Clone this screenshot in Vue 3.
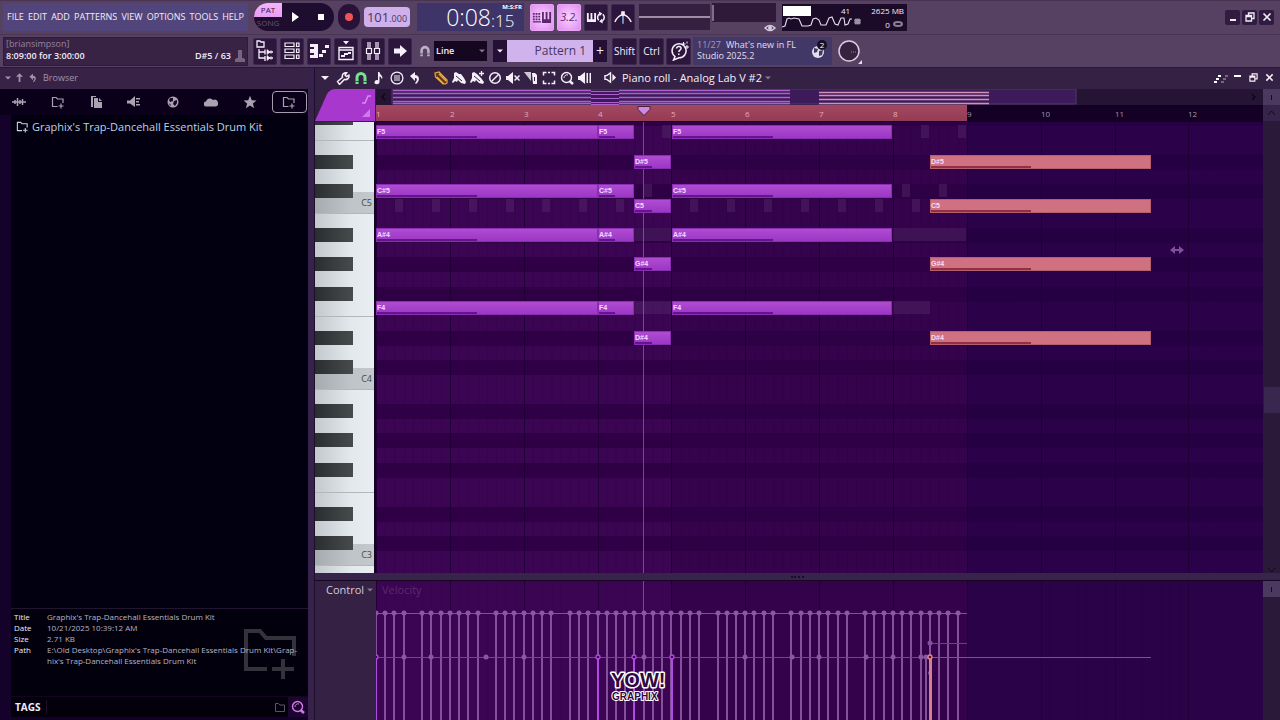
<script setup>
const menus = ['FILE', 'EDIT', 'ADD', 'PATTERNS', 'VIEW', 'OPTIONS', 'TOOLS', 'HELP']
const panels = [
  ['playlist', 'Playlist'],
  ['rack', 'Channel rack'],
  ['pianoroll', 'Piano roll'],
  ['event', 'Event editor'],
  ['mixer', 'Mixer'],
  ['arrow', 'Next'],
]
const tabs = ['wave', 'folder', 'files', 'plug', 'globe', 'cloud', 'star', 'folder']
const tools = [
  ['wrench', 'Tools'], ['magnet', 'Snap', 'green'], ['note', 'Stamp'], ['lines', 'View'], ['undo', 'Undo'],
  ['pencil', 'Draw', 'gold gap'], ['brush', 'Paint'], ['brushplus', 'Paint sequence'], ['ban', 'Delete'],
  ['mute', 'Mute'], ['slice', 'Slice'], ['select', 'Select'], ['zoom', 'Zoom'], ['play2', 'Playback'],
]
const info = [
  ['Title', "Graphix's Trap-Dancehall Essentials Drum Kit"],
  ['Date', '10/21/2025 10:39:12 AM'],
  ['Size', '2.71 KB'],
  ['Path', "E:\\Old Desktop\\Graphix's Trap-Dancehall Essentials Drum Kit\\Grap-\nhix's Trap-Dancehall Essentials Drum Kit"],
]

/* Timeline geometry: one bar in pixels, one semitone in pixels */
const BAR = 73.85
const SEMI = 176 / 12
const barX = (n) => Math.round(n * BAR)
const bars = Array.from({ length: 12 }, (_, i) => i)

/* Row 0 is F5, counting down by semitone; row -1 is the F#5 sliver */
const rowY = (r) => Math.round(3.4 + r * SEMI)
const isBlack = (r) => [1, 3, 6, 8, 10].includes((((5 - r) % 12) + 12) % 12)
const rows = Array.from({ length: 33 }, (_, i) => i - 1)
const blackRows = rows.filter(isBlack)
const keyLines = [1, 6, 13, 18, 25, 30].map(rowY)
const cKeys = [['C5', 5], ['C4', 17], ['C3', 29]]

const chord = [['F5', 0], ['C#5', 4], ['A#4', 7], ['F4', 12]]
const low = [['D#5', 2], ['C5', 5], ['G#4', 9], ['D#4', 14]]
const notes = [
  ...chord.flatMap(([name, r]) => [
    { name, r, x: 0, w: 222, v: 100 },
    { name, r, x: 222, w: 36, v: 16 },
    { name, r, x: 296, w: 220, v: 100 },
  ]),
  ...low.flatMap(([name, r]) => [
    { name, r, x: 258, w: 37, v: 17 },
    { name, r, x: 554, w: 221, v: 100, red: true },
  ]),
]
const ghosts = [
  ...[19, 56, 93, 130, 166, 203, 240, 314, 351, 388, 425, 462, 499, 536].map((x) => [x, 5, 8]),
  [268, 4, 8], [526, 4, 8], [563, 4, 8],
  [286, 0, 9], [545, 0, 8], [582, 0, 8],
  [258, 7, 37], [517, 7, 73], [258, 12, 37], [517, 12, 37],
]

const skipped = [4, 12, 20, 36, 44, 52]
const stalks = Array.from({ length: 64 }, (_, i) => i)
  .filter((i) => !skipped.includes(i))
  .map((i) => Math.round((i * BAR) / 8))
const midDots = [28, 55, 110, 148, 268, 369, 416, 443, 490, 517, 545, 550]
const rings = [0, 222, 258, 296]
const mapLines = [1, 4, 8, 12, 14]
</script>

<template>
  <svg class="defs" aria-hidden="true">
    <defs>
      <symbol id="playlist" viewBox="0 0 20 22"><path d="M2 7V1h3l1 1h3v5zM4 9v9h6M4 12h6M10 9.500v5M10 16v5M13 12h5M13 18h5" fill="none" stroke="currentColor" stroke-width="1.300" /><path d="M12 9.500l3 2.500-3 2.500zM12 15.500l3 2.500-3 2.500zM16 10v4M16 16v4" fill="currentColor" stroke="currentColor" stroke-width=".6" /></symbol>
      <symbol id="rack" viewBox="0 0 20 22"><path d="M3 3h9v3.500H3zM3 9h9v3.500H3zM3 15h9v3.500H3zM14.500 3H17v3.500h-2.500zM14.500 9H17v3.500h-2.500zM14.500 15H17v3.500h-2.500z" fill="none" stroke="currentColor" stroke-width="1.200" /></symbol>
      <symbol id="pianoroll" viewBox="0 0 20 22"><path d="M1 4h8v14H1v-3h4v-2H1v-4h4V7H1zM10 14h4v3h-4zM13 10h4v3h-4zM16 5h4v3h-4z" fill="currentColor" /></symbol>
      <symbol id="event" viewBox="0 0 20 22"><path d="M3 7.500h14v12H3zM3 10h14" fill="none" stroke="currentColor" stroke-width="1.400" /><path d="M7 1h6l-3 3.500zM5 15h4v2H5zM8 13h4v2H8zM12 12h3v2h-3z" fill="currentColor" /></symbol>
      <symbol id="mixer" viewBox="0 0 20 22"><path d="M5 2v6M7 2v6M5 14v6M7 14v6M13 2v6M15 2v6M13 14v6M15 14v6M3.500 8.500h5v5h-5zM11.500 8.500h5v5h-5z" fill="none" stroke="currentColor" stroke-width="1.200" /></symbol>
      <symbol id="arrow" viewBox="0 0 20 22"><path d="M4 8.500h6V5l7 6-7 6v-3.500H4z" fill="currentColor" /></symbol>
      <symbol id="keys" viewBox="0 0 22 16"><path d="M1 3h2v2H1zM4 3h2v2H4zM7 3h2v2H7zM1 6h2v2H1zM4 6h2v2H4zM7 6h2v2H7zM1 9h2v2H1zM4 9h2v2H4zM7 9h2v2H7zM1 12h9v1.500H1zM11 2h2v8h2V2h2v8h2V2h2v12H11z" fill="currentColor" /></symbol>
      <symbol id="loop" viewBox="0 0 22 16"><path d="M1 3h2v7h2V3h2v7h2V3h2v10H1z" fill="currentColor" /><path d="M14 11a4.500 4.500 0 0 1 1-7M18.500 4.500a4.500 4.500 0 0 1-1 7.500" fill="none" stroke="currentColor" stroke-width="1.700" /><path d="M14 1.500l4 2-3 3zM18.500 14.500l-4-2 3-3z" fill="currentColor" /></symbol>
      <symbol id="metro" viewBox="0 0 22 16"><path d="M2 13C4 8 8 5 11 5s7 3 9 8" fill="none" stroke="currentColor" stroke-width="1.500" /><path d="M11 4v11" stroke="#8ec8ff" stroke-width="1.500" /><path d="M9 1h4v4l-2 2-2-2z" fill="currentColor" /></symbol>
      <symbol id="wave" viewBox="0 0 14 14"><path d="M0 7h14M3 5v4M5.500 3v8M8 5v4M10.500 4v6" stroke="currentColor" stroke-width="1.500" /></symbol>
      <symbol id="folder" viewBox="0 0 14 14"><path d="M6.500 11.500H1.500V2.500H5L6.500 4H12v4M10 8.500v5M7.500 11h5" fill="none" stroke="currentColor" stroke-width="1.200" /></symbol>
      <symbol id="files" viewBox="0 0 14 14"><path d="M2 1h5v1H4v10H2zM5 3h4v4h4v6H5zM10 3l3 3h-3z" fill="currentColor" /></symbol>
      <symbol id="plug" viewBox="0 0 14 14"><path d="M0 5.500h3L8 1v11L3 8.500H0zM9 3h4v1.500H9zM9 6h3v1.500H9zM9 9h4v1.500H9z" fill="currentColor" /></symbol>
      <symbol id="globe" viewBox="0 0 14 14"><circle cx="7" cy="7" r="5.500" fill="currentColor" /><path d="M4 3l3 0 0 3-3 1-1-2zM8 6l3-1v3l-2 3-2-2zM3 8l2 2-1 1z" fill="#170826" /></symbol>
      <symbol id="cloud" viewBox="0 0 14 14"><path d="M2.500 11.500a2.500 2.500 0 0 1-.5-5A4 4 0 0 1 9 5a3.300 3.300 0 0 1 3 6.500z" fill="currentColor" /></symbol>
      <symbol id="star" viewBox="0 0 14 14"><path d="M7 .8l1.800 4.400 4.700.3-3.600 3 1.200 4.700L7 10.600l-4.100 2.600 1.200-4.700-3.600-3 4.700-.3z" fill="currentColor" /></symbol>
      <symbol id="wrench" viewBox="0 0 14 14"><path d="M1.500 10.500l5-4.200a3.500 3.500 0 0 1 4.200-4.500L9 4l1.500 1.600 2.400-1.500a3.500 3.500 0 0 1-4.500 4.300l-4.900 5z" fill="none" stroke="currentColor" stroke-width="1.500" /></symbol>
      <symbol id="magnet" viewBox="0 0 14 14"><path d="M3 13V6.500a4 4 0 0 1 8 0V13" fill="none" stroke="currentColor" stroke-width="3" /><path d="M1.500 10.500h3M9.500 10.500h3" stroke="#222" stroke-width=".8" /></symbol>
      <symbol id="note" viewBox="0 0 14 14"><path d="M6 1h1.500c0 2.500 3 3 3 6l-.8 1C9.500 6 8 5.500 7.500 5.500V11A2.500 2 0 1 1 6 9.300z" fill="currentColor" /></symbol>
      <symbol id="lines" viewBox="0 0 14 14"><circle cx="7" cy="7" r="5.900" fill="none" stroke="currentColor" stroke-width="1.300" /><path d="M4 5h6M4 7h6M4 9h6" stroke="currentColor" stroke-width="1" /></symbol>
      <symbol id="undo" viewBox="0 0 14 14"><path d="M2 5l5-4v3c4 0 6 5 1 9l-1-1c3-3 2-5 0-5v3z" fill="currentColor" /></symbol>
      <symbol id="pencil" viewBox="0 0 14 14"><path d="M1 2l4-1 8 8v3l-1.500 1H9L1.500 6zM3 6l7 7M5 3l7 7" fill="#5a3a18" stroke="currentColor" stroke-width="1.200" /></symbol>
      <symbol id="brush" viewBox="0 0 14 14"><path d="M2 2l2-1 3 2 2 0 3 4 2 4-1 2-4-1-3-3-1 2-2-1-2 2-1-1 2-4z" fill="currentColor" /><path d="M4 5l6 5" stroke="#332143" /></symbol>
      <symbol id="brushplus" viewBox="0 0 14 14"><path d="M2 2l2-1 3 2 1 1 3 3 3 4-1 2-4-1-3-3-1 2-2-1-2 2-1-1 2-4z" fill="currentColor" /><path d="M4 5l6 5" stroke="#332143" /><path d="M11.500 0v5M9 2.500h5" stroke="currentColor" stroke-width="1.300" /></symbol>
      <symbol id="ban" viewBox="0 0 14 14"><circle cx="7" cy="7" r="5.300" fill="none" stroke="currentColor" stroke-width="1.500" /><path d="M3.500 10.500l7-7" stroke="currentColor" stroke-width="1.500" /></symbol>
      <symbol id="mute" viewBox="0 0 14 14"><path d="M0 5h2l5-4v12L2 9H0z" fill="currentColor" /><path d="M8.500 4.500l5 5M13.500 4.500l-5 5" stroke="currentColor" stroke-width="1.500" /></symbol>
      <symbol id="slice" viewBox="0 0 14 14"><path d="M0 1h7v9z" fill="currentColor" opacity=".8" /><path d="M8 2h3l2 2v9H9z" fill="currentColor" /><path d="M10 6h1v4h-1z" fill="#332143" /></symbol>
      <symbol id="select" viewBox="0 0 14 14"><path d="M1.500 4.500v-3h3M9.500 1.500h3v3M12.500 9.500v3h-3M4.500 12.500h-3v-3M6 1.500h2M6 12.500h2" fill="none" stroke="currentColor" stroke-width="1.500" /></symbol>
      <symbol id="zoom" viewBox="0 0 14 14"><circle cx="6.500" cy="6.500" r="5" fill="none" stroke="currentColor" stroke-width="1.400" /><path d="M4 7a3 3 0 0 1 4-3" fill="none" stroke="currentColor" /><path d="M9.500 10l3.500 3" stroke="currentColor" stroke-width="2.500" /></symbol>
      <symbol id="play2" viewBox="0 0 14 14"><path d="M0 5h2l5-4v12L2 9H0zM8.500 2H10v10H8.500zM11.500 2H13v10h-1.500z" fill="currentColor" /></symbol>
      <symbol id="speaker" viewBox="0 0 14 14"><path d="M1 5h2l4-3v10L3 9H1z" fill="none" stroke="currentColor" stroke-width="1.500" /><path d="M9 3l4 4-4 4z" fill="currentColor" /></symbol>
      <symbol id="down" viewBox="0 0 8 8"><path d="M0 2h8L4 6z" fill="currentColor" /></symbol>
      <symbol id="up" viewBox="0 0 8 12"><path d="M4 1l4 4H5v6H3V5H0z" fill="currentColor" /></symbol>
      <symbol id="restore" viewBox="0 0 10 10"><path d="M1 3.500h5.500V9H1zM1 4.500h5.500M3.500 3V1H9v5.500H7" fill="none" stroke="currentColor" stroke-width="1.300" /></symbol>
      <symbol id="close" viewBox="0 0 10 10"><path d="M1.500 1.500l7 7M8.500 1.500l-7 7" stroke="currentColor" stroke-width="1.700" /></symbol>
      <symbol id="min" viewBox="0 0 10 10"><path d="M2 8h6" stroke="currentColor" stroke-width="2" /></symbol>
      <symbol id="help" viewBox="0 0 20 20"><path d="M6 15.500a7 7 0 1 1 4 1.300L4.500 19z" fill="none" stroke="currentColor" stroke-width="1.500" /><path d="M7.500 7.500c.5-3 5-2.500 4.500.2-.3 1.500-2.200 1.500-2.200 3.300M9.800 12.500v1.500" fill="none" stroke="currentColor" stroke-width="1.500" /><path d="M14.500 1v4M12.500 3h4M18 4v4M16 6h4M18 .5v2" stroke="currentColor" /></symbol>
    </defs>
  </svg>

  <div class="app">
    <header class="top">
      <div class="bar">
        <nav class="menu" aria-label="Main menu">
          <button v-for="m in menus" :key="m" type="button">{{ m }}</button>
        </nav>
        <div class="transport">
          <button class="mode" type="button" aria-label="Pattern or song"><b>PAT</b><span>SONG</span></button>
          <button class="tbtn" type="button" aria-label="Play"><svg width="7" height="10"><path d="M0 0l7 5-7 5z" fill="#fff" /></svg></button>
          <button class="tbtn" type="button" aria-label="Stop"><svg width="6" height="6"><path d="M0 0h6v6H0z" fill="#fff" /></svg></button>
        </div>
        <button class="rec" type="button" aria-label="Record"><i></i></button>
        <button class="tempo" type="button" aria-label="Tempo">101<small>.000</small></button>
        <div class="time"><span>0:08</span><div><small>M:S:FR</small><em>:15</em></div></div>
        <div class="keyset">
          <button class="sq lit" type="button" aria-label="Typing keyboard"><svg width="20" height="15"><use href="#keys" /></svg></button>
          <button class="sq lit num" type="button" aria-label="Countdown">3.2.</button>
          <button class="sq" type="button" aria-label="Loop recording"><svg width="20" height="15"><use href="#loop" /></svg></button>
          <button class="sq" type="button" aria-label="Metronome"><svg width="20" height="15"><use href="#metro" /></svg></button>
        </div>
        <input class="vol" type="range" value="0" aria-label="Main volume" />
        <div class="pitchbox">
          <input class="pitch" type="range" value="0" aria-label="Main pitch" />
          <svg width="12" height="8"><path d="M1 4q5-5 10 0-5 5-10 0z" fill="none" stroke="#d8cce0" stroke-width="1.500" /><circle cx="6" cy="4" r="2" fill="#d8cce0" /></svg>
        </div>
        <div class="cpu">
          <svg class="graph" width="80" height="26"><path d="M1 1h28v10H1z" fill="#fff" /><path d="M0 22l3-1 2-7 2-1 2 1 3-1 5 1 3 7 6 0 3-1 2-6 3-1 3 2 2 5 5 0 3-7 3-1 3 7 3 1 3-7 3 0 1 7 3-1 2-5 2 0" fill="none" stroke="#e4dcec" stroke-width="1.100" /><path d="M73 14h5v5h-5zM72 15.500h7M72 17.500h7" fill="#9c90a6" stroke="#9c90a6" stroke-width=".7" /></svg>
          <span class="load">41</span>
          <span class="mem">2625 MB<br />0 <svg width="12" height="7"><ellipse cx="6" cy="3" rx="4" ry="2" fill="none" stroke="#8d8095" stroke-width="2" /></svg></span>
        </div>
        <div class="win">
          <button v-for="w in ['min', 'restore', 'close']" :key="w" type="button" :aria-label="w"><svg width="10" height="10"><use :href="'#' + w" /></svg></button>
        </div>
      </div>

      <div class="bar second">
        <div class="hint">
          <div><p class="dim">[briansimpson]</p><p>8:09:00 for 3:00:00</p></div>
          <p class="right">D#5 / 63 <svg width="10" height="12"><path d="M3 0h4v8h2v1h1v3H0V9h1V8h2z" fill="#75657f" /></svg></p>
        </div>
        <div class="panels">
          <button v-for="p in panels" :key="p[0]" class="sq" type="button" :aria-label="p[1]"><svg width="20" height="22"><use :href="'#' + p[0]" /></svg></button>
        </div>
        <svg class="mag" width="12" height="12"><use href="#magnet" /></svg>
        <div class="snap">
          <select aria-label="Snap"><option>Line</option></select>
          <svg width="6" height="6"><use href="#down" /></svg>
        </div>
        <div class="pattern">
          <button type="button" aria-label="Pattern menu"><svg width="6" height="6"><use href="#down" /></svg></button>
          <input type="text" value="Pattern 1" aria-label="Pattern name" />
          <button type="button" aria-label="Add pattern">+</button>
        </div>
        <div class="keyset mods">
          <button class="sq" type="button">Shift</button>
          <button class="sq" type="button">Ctrl</button>
          <button class="sq" type="button" aria-label="Help"><svg width="20" height="20"><use href="#help" /></svg></button>
        </div>
        <a class="news" href="#news">
          <span><i>11/27</i>What's new in FL<br />Studio 2025.2</span>
          <svg width="18" height="24"><circle cx="8" cy="14" r="6" fill="#e3dced" /><path d="M4 10l4 1-1 3-3 1zM9 13l4-1-1 5-3 1z" fill="#3e3966" /><circle cx="12" cy="7" r="5" fill="#171022" /><text x="12" y="10" text-anchor="middle" font-size="8" fill="#fff">2</text></svg>
        </a>
        <button class="knob" type="button" aria-label="Pan"><svg width="26" height="26"><circle cx="12" cy="13" r="10" fill="#36213f" stroke="#d9cce2" stroke-width="1.500" /><path d="M14 14h5" stroke="#998aa4" stroke-dasharray="1 1" /><path d="M25 22v4h-4z" fill="#e8dcf0" /></svg></button>
      </div>
    </header>

    <main class="body">
      <aside class="browser">
        <div class="bhead">
          <svg width="6" height="6"><use href="#down" /></svg>
          <svg width="7" height="11"><use href="#up" /></svg>
          <svg width="10" height="10"><use href="#undo" /></svg>
          <span>Browser</span>
        </div>
        <div class="tabs">
          <button v-for="(t, i) in tabs" :key="i" type="button" :class="{ on: i === 7 }" :aria-label="'Browser tab ' + (i + 1)"><svg width="14" height="14"><use :href="'#' + t" /></svg></button>
        </div>
        <div class="tree">
          <button class="item" type="button"><svg width="13" height="13"><use href="#folder" /></svg>Graphix's Trap-Dancehall Essentials Drum Kit</button>
        </div>
        <section class="info">
          <svg class="bigfolder" width="54" height="54"><path d="M24 41H3V3h14l6 7h28v18M40 31v20M29 41h22" fill="none" stroke="currentColor" stroke-width="4" /></svg>
          <dl>
            <template v-for="r in info" :key="r[0]"><dt>{{ r[0] }}</dt><dd>{{ r[1] }}</dd></template>
          </dl>
        </section>
        <div class="tags">
          <label for="tags">TAGS</label>
          <input id="tags" type="text" />
          <svg class="tf" width="10" height="9"><path d="M.5 8.500V.5h3L5 2h4.500v6.500z" fill="none" stroke="#5a5563" /></svg>
          <button type="button" aria-label="Search"><svg width="14" height="14"><use href="#zoom" /></svg></button>
        </div>
      </aside>

      <section class="roll">
        <div class="rhead">
          <svg class="drop" width="8" height="8"><use href="#down" /></svg>
          <button v-for="t in tools" :key="t[0]" type="button" :class="t[2]" :aria-label="t[1]"><svg width="14" height="14"><use :href="'#' + t[0]" /></svg></button>
          <svg class="spk" width="13" height="13"><use href="#speaker" /></svg>
          <h1>Piano roll - Analog Lab V #2</h1>
          <svg class="faint" width="6" height="6"><use href="#down" /></svg>
          <div class="rwin">
            <svg width="14" height="10"><path d="M0 9h3M2 6h3M4 3h3" stroke="#fff" stroke-width="2" /><path d="M7 9h3M9 6h3M11 3h3" stroke="#8d7d99" stroke-width="1.500" /></svg>
            <button type="button" aria-label="Minimize"><svg width="9" height="9"><path d="M1 3h7" stroke="#fff" stroke-width="2" /></svg></button>
            <button type="button" aria-label="Restore"><svg width="9" height="9"><use href="#restore" /></svg></button>
            <button type="button" aria-label="Close"><svg width="9" height="9"><use href="#close" /></svg></button>
          </div>
        </div>

        <div class="grid">
          <svg class="corner">
            <path d="M0 32L12 5Q15 0 21 0H60V32z" fill="#a837cd" />
            <path d="M47 14h3l3-7h3" fill="none" stroke="#d98bf0" stroke-width="1.500" /><path d="M55 20v8h-8z" fill="#d079e8" />
          </svg>
          <svg class="rulers">
            <rect width="100%" height="16" fill="#251433" />
            <path d="M9 5L6 8l3 3" fill="none" stroke="#0d0416" stroke-width="1.200" />
            <path d="M876 5l3 3-3 3" fill="none" stroke="#0d0416" stroke-width="1.200" />
            <rect x="16" y="0" width="684" height="15" fill="#3d1a59" stroke="#593472" />
            <g v-for="y in mapLines" :key="y">
              <path :d="`M17 ${y}.5H215M243 ${y}.5H414`" stroke="#ab60cb" stroke-width="1.500" />
              <path :d="`M215 ${y + 1}.5h28`" stroke="#ab60cb" />
            </g>
            <path d="M443 3.500h170M443 6.500h170M443 10.500h170M443 14.500h170" stroke="#d590b8" stroke-width="1.500" />
            <rect y="16" width="100%" height="17" fill="#130024" />
            <rect y="16" width="591" height="16" fill="url(#red)" />
            <defs><linearGradient id="red" x1="0" y1="0" x2="0" y2="1"><stop offset="0" stop-color="#a34860" /><stop offset="1" stop-color="#963b55" /></linearGradient></defs>
            <text v-for="b in bars" :key="b" :x="barX(b)" y="28" :class="{ out: b > 7 }" class="num">{{ b + 1 }}</text>
            <path d="M262 17.500h12v3l-6 6-6-6z" fill="#cb8be0" stroke="#4c2038" />
          </svg>
          <div class="side">
            <button type="button" class="lite" aria-label="Zoom"><i></i></button>
            <button type="button" aria-label="Scroll up"><svg width="9" height="6"><path d="M1 5l3.500-4L8 5" fill="none" stroke="#140a1e" /></svg></button>
          </div>

          <svg class="keys">
            <defs><linearGradient id="wk"><stop offset="0" stop-color="#c3c8cc" /><stop offset=".6" stop-color="#e3e8ec" /><stop offset="1" stop-color="#e9eef2" /></linearGradient><linearGradient id="bk"><stop offset="0" stop-color="#2a2e30" /><stop offset="1" stop-color="#484b4c" /></linearGradient></defs>
            <rect width="59" height="100%" fill="url(#wk)" />
            <g v-for="c in cKeys" :key="c[0]">
              <rect :y="rowY(c[1]) - 7" width="59" height="22" fill="#3a4448" opacity=".22" />
              <text x="57" :y="rowY(c[1]) + 7" text-anchor="end">{{ c[0] }}</text>
            </g>
            <rect v-for="y in keyLines" :key="y" :y="y" width="59" height="1" fill="#b1b7ba" />
            <rect v-for="r in blackRows" :key="r" :y="rowY(r)" width="38" height="14" fill="url(#bk)" />
          </svg>
          <svg class="canvas">
            <defs>
              <pattern id="steps" :width="BAR" height="40" patternUnits="userSpaceOnUse">
                <path v-for="i in 7" :key="i" :d="`M${Math.round((i * BAR) / 8)}.5 0V40`" stroke="#2a0040" stroke-opacity=".45" />
              </pattern>
              <linearGradient id="nv" x1="0" y1="0" x2="0" y2="1"><stop offset="0" stop-color="#b04bd2" /><stop offset="1" stop-color="#9b37c4" /></linearGradient>
            </defs>
            <rect width="100%" height="100%" fill="#3b0553" />
            <rect width="100%" height="100%" fill="url(#steps)" />
            <rect v-for="r in blackRows" :key="r" :y="rowY(r)" width="100%" height="15" fill="#2f0045" />
            <rect x="296" width="295" height="100%" fill="#2e0044" opacity=".45" />
            <rect x="591" width="100%" height="100%" fill="#1c0040" opacity=".5" />
            <rect v-for="b in bars" :key="b" :x="barX(b)" width="1" height="100%" fill="#1d0034" />
            <rect v-for="(g, i) in ghosts" :key="i" :x="g[0]" :y="rowY(g[1])" :width="g[2]" height="13" fill="#6d4480" opacity=".26" />
            <rect x="267" width="1" height="100%" fill="#9268aa" opacity=".7" />
            <g v-for="(n, i) in notes" :key="i" :class="{ red: n.red }">
              <rect :x="n.x" :y="rowY(n.r)" :width="n.w" height="14" class="edge" />
              <rect :x="n.x + 1" :y="rowY(n.r) + 1" :width="n.w - 2" height="12" class="face" />
              <rect :x="n.x + 1" :y="rowY(n.r) + 11" :width="n.v" height="2" class="len" />
              <text :x="n.x + 1" :y="rowY(n.r) + 9">{{ n.name }}</text>
            </g>
            <path d="M799 124l-5 4 5 4v-3h4v3l5-4-5-4v3h-4z" fill="#7d5098" />
          </svg>
          <div class="side track"><i class="thumb"></i><svg width="9" height="6"><path d="M1 1l3.500 4L8 1" fill="none" stroke="#140a1e" /></svg></div>

          <div class="split"><span></span></div>

          <button class="control" type="button">Control <svg width="6" height="6"><use href="#down" /></svg></button>
          <svg class="canvas vel">
            <rect width="100%" height="100%" fill="#3b0553" />
            <rect width="100%" height="100%" fill="url(#steps)" opacity=".6" />
            <rect x="296" width="295" height="100%" fill="#2e0044" opacity=".5" />
            <rect x="591" width="100%" height="100%" fill="#1c0040" opacity=".55" />
            <rect v-for="b in bars" :key="b" :x="barX(b)" width="1" height="100%" fill="#24003a" />
            <text x="6" y="13" class="vlabel">Velocity</text>
            <rect x="267" width="1" height="100%" fill="#9268aa" opacity=".7" />
            <rect v-for="s in stalks" :key="s" :x="s - 1" y="32" width="2" height="100%" fill="#85509b" />
            <path d="M0 32.500H591" stroke="#85509b" />
            <path d="M0 76.500H554" stroke="#7e3ba0" />
            <path d="M554 76.500H775" stroke="#8c5070" />
            <path d="M554 62.500H591" stroke="#6f3c88" />
            <circle v-for="s in stalks" :key="'d' + s" :cx="s" cy="32" r="2.500" fill="#8b56a2" />
            <circle v-for="s in midDots" :key="'m' + s" :cx="s" cy="76" r="2.500" fill="#8b56a2" />
            <circle cx="554" cy="62" r="2.500" fill="#85509b" />
            <circle cx="554" cy="92" r="2" fill="#85509b" />
            <rect x="549" y="77" width="2" height="100%" fill="#85509b" />
            <g v-for="s in rings" :key="'r' + s">
              <rect :x="s - 1" y="78" width="2" height="100%" fill="#b04be0" />
              <circle :cx="s" cy="76" r="2" fill="#3b0553" stroke="#b04be0" stroke-width="1.300" />
            </g>
            <rect x="553" y="78" width="3" height="100%" fill="#d27f8e" />
            <circle cx="554" cy="76" r="2" fill="#5a1030" stroke="#e08a8a" stroke-width="1.300" />
            <g class="logo">
              <text x="235" y="106" class="yow">YOW!</text>
              <text x="236" y="119" class="gfx">GRAPHIX</text>
            </g>
          </svg>
          <div class="side track"><button type="button" class="lite" aria-label="Zoom velocity"><i></i></button></div>
        </div>
      </section>
    </main>
  </div>
</template>

<style>
body { margin: 0; background: #33203f; overflow: hidden; }
</style>

<style scoped>
.defs { position: absolute; width: 0; height: 0; }
* { box-sizing: border-box; }
svg { display: block; flex: none; }
p, h1, dl, dd { margin: 0; }
button, input, select { font: inherit; color: inherit; border: 0; padding: 0; margin: 0; background: none; border-radius: 0; }
.app { height: 100vh; display: flex; flex-direction: column; font: 10px/12px "Open Sans", "Noto Sans", sans-serif; color: #f2ecf7; background: #36224a; overflow: hidden; }

.top { flex: none; background: #564163; border-bottom: 1px solid #291638; }
.bar { display: flex; align-items: center; height: 34px; padding: 0 6px 1px 3px; border-top: 1px solid #493453; }
.bar.second { height: 33px; padding-bottom: 0; }
.menu { width: 245px; height: 28px; flex: none; display: flex; align-items: center; justify-content: space-between; padding: 0 4px; background: #52457c; font: 9px/16px "Open Sans", "Noto Sans", sans-serif; }
.transport { margin-left: 6px; width: 80px; height: 28px; flex: none; display: flex; align-items: center; background: #1f0d30; border-radius: 14px; overflow: hidden; }
.mode { width: 28px; height: 28px; font-size: 8px; }
.mode b { display: block; height: 14px; line-height: 14px; font-weight: 400; color: #301040; background: linear-gradient(#f6b4fb, #e79df3); }
.mode span { display: block; height: 14px; color: #66536f; line-height: 12px; }
.tbtn { width: 26px; height: 28px; display: grid; place-items: center; }
.rec { margin-left: 4px; width: 22px; height: 26px; flex: none; display: grid; place-items: center; background: #281238; border-radius: 11px; }
.rec i { width: 8px; height: 8px; border-radius: 4px; background: #ef5356; }
.tempo { margin-left: 4px; width: 46px; height: 20px; flex: none; border-radius: 4px; background: #cfb0ea; color: #4a3560; font: 13px/20px "Open Sans", sans-serif; white-space: nowrap; }
.tempo small { font-size: 9px; }
.time { margin-left: 7px; width: 107px; height: 28px; flex: none; display: flex; justify-content: flex-end; background: #3f3468; padding-right: 2px; color: #fff; }
.time span { font: 300 23px/28px "Open Sans", sans-serif; }
.time div { display: flex; flex-direction: column; width: 31px; }
.time em { font: 300 17px/20px "Open Sans", sans-serif; }
.time small { text-align: right; font: bold 6px/8px "Open Sans", sans-serif; }
.keyset { margin-left: 6px; display: flex; gap: 3px; flex: none; }
.sq { width: 24px; height: 27px; display: grid; place-items: center; background: #2c163c; border: 1px solid #3d2650; border-radius: 2px; color: #f6eefb; }
.sq.lit { background: radial-gradient(#fbd0ff, #df8ef0); color: #5a2670; border-color: #e9a5f4; }
.num { font-style: italic; font-size: 11px; }
.vol { -webkit-appearance: none; appearance: none; margin-left: 4px; width: 71px; height: 26px; flex: none; background: linear-gradient(#9d8da6, #9d8da6) 0 50% / 100% 2px no-repeat #352041; }
.vol::-webkit-slider-thumb { -webkit-appearance: none; width: 1px; height: 1px; }
.pitchbox { margin-left: 2px; width: 64px; height: 28px; flex: none; display: flex; flex-direction: column; align-items: flex-end; gap: 2px; }
.pitch { -webkit-appearance: none; appearance: none; width: 64px; height: 19px; flex: none; background: #2f1a3a; }
.pitch::-webkit-slider-thumb { -webkit-appearance: none; width: 2px; height: 16px; background: #806f8c; }
.cpu { margin-left: 6px; width: 125px; height: 27px; flex: none; background: #1c0b28; position: relative; display: flex; justify-content: flex-end; }
.graph { position: absolute; left: 0; top: 1px; }
.load { font-size: 8px; line-height: 14px; width: 20px; }
.mem { width: 46px; text-align: right; font-size: 8px; line-height: 14px; padding-right: 3px; white-space: nowrap; }
.mem svg { display: inline-block; }
.win { margin-left: auto; display: flex; gap: 2px; }
.win button { width: 15px; height: 15px; display: grid; place-items: center; background: #311b40; border-radius: 2px; }

.hint { width: 245px; height: 29px; flex: none; background: #392345; border: 1px solid #30193d; padding: 0 2px; display: flex; justify-content: space-between; }
.hint p { line-height: 12px; white-space: nowrap; font-size: 9px; font-weight: 600; }
.hint .dim { color: #93839f; font-weight: 400; }
.hint .right { align-self: flex-end; display: flex; gap: 4px; padding-bottom: 3px; }
.panels { margin-left: 5px; display: flex; gap: 3px; flex: none; }
.mag { margin-left: 7px; color: #bcb0c6; }
.snap { margin-left: 3px; width: 53px; height: 20px; flex: none; position: relative; background: #14071f; }
.snap select { -webkit-appearance: none; appearance: none; width: 100%; height: 20px; padding-left: 2px; font-size: 9px; font-weight: 600; }
.snap svg { position: absolute; right: 2px; top: 7px; color: #85758f; }
.pattern { margin-left: 6px; display: flex; height: 22px; flex: none; }
.pattern button { width: 14px; background: #251035; display: grid; place-items: center; font-size: 14px; }
.pattern input { width: 86px; background: #d0b3ec; color: #4a3560; text-align: right; padding-right: 7px; font: 12px/20px "Open Sans", sans-serif; }
.mods { margin-left: 5px; font-size: 10px; gap: 2px; }
.mods .sq { width: 25px; }
.news { margin-left: 2px; width: 139px; height: 28px; flex: none; background: #423868; color: #e4deef; text-decoration: none; font-size: 9px; line-height: 11px; padding: 2px 4px 0; display: flex; justify-content: space-between; white-space: nowrap; }
.news i { font-style: normal; color: #a499bd; margin-right: 5px; }
.news svg { margin-top: -1px; }
.knob { margin-left: 5px; }

.body { flex: 1; min-height: 0; display: flex; }
.browser { width: 308px; flex: none; display: flex; flex-direction: column; background: #14022a; }
.bhead { height: 21px; flex: none; display: flex; align-items: center; gap: 5px; padding: 0 0 2px 5px; background: #382346; color: #a193ab; font-size: 9px; }
.tabs { height: 26px; flex: none; display: flex; background: #0b0019; padding-top: 2px; color: #aaa2b1; }
.tabs button { flex: 1; height: 22px; display: grid; place-items: center; border: 1px solid transparent; border-radius: 4px; }
.tabs .on { flex: none; width: 35px; margin: 0 1px 0 3px; border-color: #a49dab; }
.tree { flex: 1; margin-left: 11px; background: #020010; min-height: 0; }
.item { display: flex; align-items: center; gap: 3px; height: 19px; margin: 2px 0 0 5px; color: #bfd2e2; font: 11px/16px "Open Sans", "Noto Sans", sans-serif; white-space: nowrap; }
.info { flex: none; height: 88px; margin-left: 11px; background: #02000c; border-top: 1px solid #211530; position: relative; }
.info dl { position: relative; display: grid; grid-template-columns: 33px 1fr; padding: 2px 0 0 3px; font-size: 8px; line-height: 11px; }
.info dt { color: #f0ecf4; }
.info dd { color: #b5b5c6; white-space: pre; }
.bigfolder { position: absolute; right: 11px; top: 19px; color: #55555d; opacity: .6; }
.tags { flex: none; height: 24px; margin-left: 11px; border-top: 1px solid #12051c; border-bottom: 3px solid #12022a; display: flex; align-items: center; background: #03000c; }
.tags label { width: 36px; padding-left: 4px; font: bold 10px/14px "Open Sans", "Noto Sans", sans-serif; border-right: 1px solid #1d0f2c; }
.tags input { flex: 1; min-width: 0; height: 18px; }
.tags button { width: 20px; height: 20px; margin-left: 3px; display: grid; place-items: center; background: #1c0630; color: #d27be4; }

.roll { flex: 1; min-width: 0; margin-left: 6px; display: flex; flex-direction: column; background: #342144; border-left: 1px solid #1e0f2c; }
.rhead { height: 21px; flex: none; display: flex; align-items: center; color: #f5effa; padding: 0 0 2px 6px; }
.rhead .drop { margin-right: 5px; }
.rhead button { width: 18px; height: 18px; display: grid; place-items: center; flex: none; }
.rhead .green { color: #72e58d; }
.rhead .gold { color: #f0a93c; }
.rhead .gap { margin-left: 8px; }
.rhead .spk { margin: 0 5px 0 10px; }
.rhead h1 { font: 500 11px/14px "Open Sans", sans-serif; white-space: nowrap; }
.faint { margin-left: 3px; color: #85768f; }
.rwin { margin-left: auto; display: flex; align-items: center; padding-right: 2px; }
.rwin button { width: 16px; }
.rwin svg:first-child { margin-right: 2px; }
.grid { flex: 1; min-height: 0; display: grid; grid-template-columns: 61px minmax(0, 1fr) 17px; grid-template-rows: 33px minmax(0, 1fr) 8px 139px; }
.grid > svg { width: 100%; height: 100%; overflow: hidden; }
.rulers .num { font: 8px "Open Sans", sans-serif; fill: #e9a9b4; }
.rulers .num.out { fill: #a196ad; }
.side { background: #2b1939; display: flex; flex-direction: column; align-items: center; }
.side button { width: 17px; height: 16px; display: grid; place-items: center; background: #37244a; }
.side .lite { background: #4c3960; }
.side .lite i { width: 1px; height: 5px; background: #150b20; }
.track { justify-content: space-between; }
.thumb { width: 16px; height: 26px; margin-top: 265px; background: #3a2750; }
.keys { background: #14041f; }
.keys text { font: 9px "Open Sans", sans-serif; fill: #454b50; }
.canvas .edge { fill: #8a2db4; }
.canvas .face { fill: url(#nv); }
.canvas .len { fill: #65138f; }
.canvas text { font: bold 7px "Liberation Sans", sans-serif; fill: #f6ddfb; }
.canvas .red .edge { fill: #b5606c; }
.canvas .red .face { fill: #cf7181; }
.canvas .red .len { fill: #922f48; }
.split { grid-column: 1 / -1; display: flex; justify-content: center; align-items: center; background: #38244a; border-bottom: 1px solid #160622; }
.split span { width: 13px; border-top: 2px dotted #1b0a28; }
.control { align-self: start; display: flex; align-items: center; gap: 3px; padding: 2px 0 0 11px; font-size: 11px; line-height: 13px; color: #d6c9df; white-space: nowrap; }
.control svg { color: #85768f; }
.canvas .vlabel { font: 11px "Open Sans", sans-serif; fill: #5a2a70; }
.canvas .logo text { fill: #30083f; stroke: #fff; stroke-width: 3px; paint-order: stroke; stroke-linejoin: round; }
.canvas .logo .yow { font: bold 20px "Liberation Sans", sans-serif; }
.canvas .logo .gfx { font: bold 10px "Liberation Sans", sans-serif; stroke-width: 2px; }
</style>
